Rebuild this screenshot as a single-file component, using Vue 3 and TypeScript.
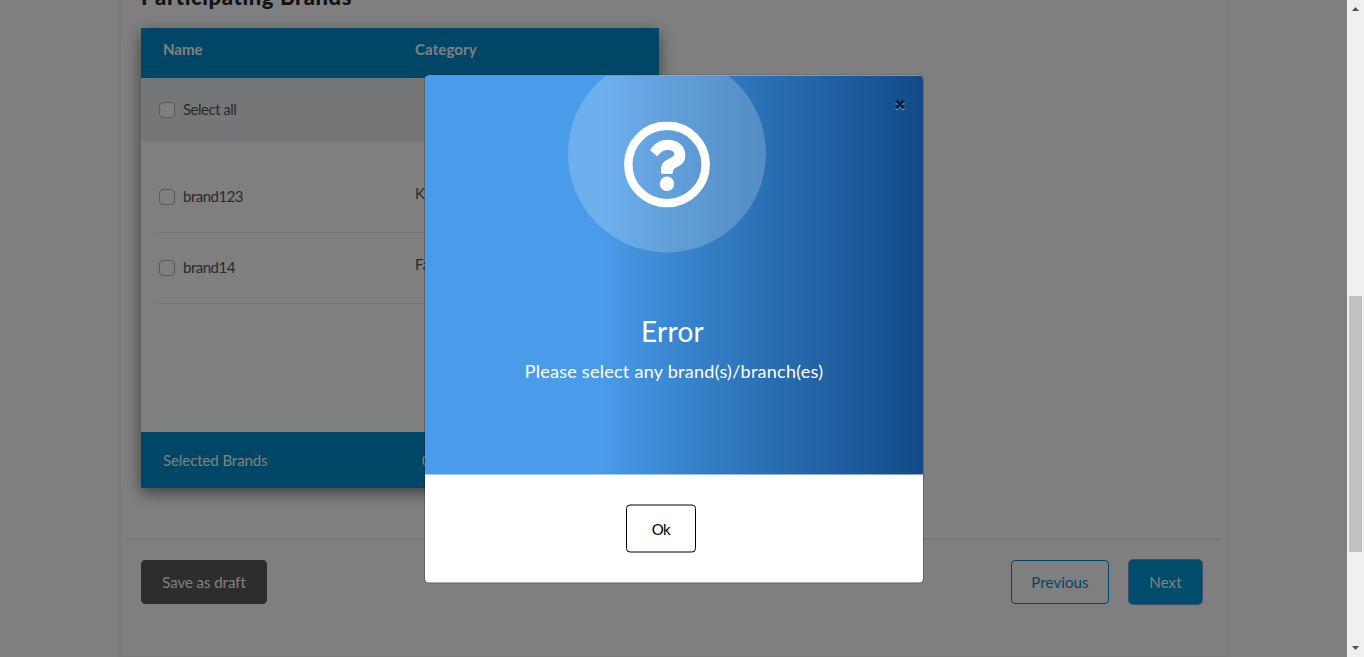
<script setup lang="ts">
import { ref } from 'vue'

interface Brand {
  name: string
  category: string
  selected: boolean
}

const brands = ref<Brand[]>([
  { name: 'brand123', category: 'Kids', selected: false },
  { name: 'brand14', category: 'Fashion', selected: false },
])
</script>

<template>
  <div class="screen">
    <main class="page">
      <section class="panel">
        <h2>Participating Brands</h2>
        <div class="table">
          <div class="thead">
            <span class="col t-name">Name</span>
            <span class="t-cat">Category</span>
          </div>
          <div class="select-all">
            <span class="box"></span><span class="t-all">Select all</span>
          </div>
          <div class="tbody">
            <div v-for="b in brands" :key="b.name" class="row">
              <span class="box"></span>
              <span class="brand">{{ b.name }}</span>
              <span class="category">{{ b.category }}</span>
            </div>
          </div>
          <div class="tfoot">
            <span class="col t-selected">Selected Brands</span>
            <span class="count">0</span>
          </div>
        </div>
        <div class="actions">
          <button class="btn save"><span>Save as draft</span></button>
          <button class="btn prev"><span>Previous</span></button>
          <button class="btn next"><span>Next</span></button>
        </div>
      </section>
    </main>

    <div class="scrollbar">
      <svg width="17" height="17" viewBox="0 0 17 17"><path d="M5 11h7L8.500 7z" fill="#505050" /></svg>
      <div class="thumb"></div>
      <svg class="down" width="17" height="17" viewBox="0 0 17 17"><path d="M5 6h7L8.500 10z" fill="#505050" /></svg>
    </div>

    <div class="backdrop">
      <div class="modal">
        <div class="hero">
          <div class="halo"></div>
          <svg class="close" width="12" height="12" viewBox="0 0 12 12">
            <path d="M2.200 3.200l7.600 7.600M9.800 3.200l-7.600 7.600" stroke="#a9c3df" stroke-width="2.800" />
            <path d="M2.200 2.200l7.600 7.600M9.800 2.200l-7.600 7.600" stroke="#09264a" stroke-width="3.200" />
          </svg>
          <svg class="question" width="86" height="86" viewBox="0 0 86 86">
            <circle cx="43" cy="43" r="38.700" fill="none" stroke="#fff" stroke-width="8.500" />
            <path
              d="M26 28.700C30 22.500 35 18.300 43.500 18.300C53 18.300 61.300 24 61.300 33.300C61.300 41 57.500 43.800 52 46C49.500 47.200 49 48.500 49 50.500Q49 52.600 47.300 52.600H38.700Q37 52.600 37 51V47.500C37 42.500 40 39.800 44.500 37.500C48.500 35.500 50.300 34.500 50.300 32.500C50.300 29.800 47 28.400 43.500 28.400C39 28.400 36.500 30.800 33.200 34.700Z"
              fill="#fff"
            />
            <circle cx="43" cy="62.300" r="7.200" fill="#fff" />
          </svg>
          <h3><span>Error</span></h3>
          <p><span>Please select any brand(s)/branch(es)</span></p>
        </div>
        <div class="foot">
          <button class="ok"><span>Ok</span></button>
        </div>
      </div>
    </div>
  </div>
</template>

<style>
body {
  margin: 0;
  overflow: hidden;
}
</style>

<style scoped>
* {
  box-sizing: border-box;
}
.screen {
  position: relative;
  display: flex;
  width: 1364px;
  height: 657px;
  overflow: hidden;
  background: #fff;
  font-family: Lato, "Open Sans", sans-serif;
  font-size: 15px;
}
.page {
  width: 1347px;
  height: 657px;
  padding-left: 119px;
  overflow: hidden;
}
.panel {
  width: 1110px;
  height: 657px;
  padding: 0 5px 0 6px;
  border: solid #f4f4f4;
  border-width: 0 2px 1px;
  overflow: hidden;
}
h2 {
  height: 28px;
  margin: 0 0 0 14px;
  font-size: 22px;
  line-height: 28px;
  font-weight: 900;
  color: #212529;
  letter-spacing: 0.6px;
}
h2::before {
  content: "";
  display: block;
  margin-top: -17px;
}
.table {
  width: 518px;
  height: 460px;
  margin: 17px 0 50px 14px;
  background: #fff;
  box-shadow: 0 5px 15px rgba(0, 0, 0, 0.5);
}
.thead {
  display: flex;
  height: 50px;
  padding: 0 22px;
  line-height: 42px;
  font-weight: 700;
  color: #fff;
  background: #008ccc;
}
.t-cat {
  letter-spacing: 0.12px;
}
.col {
  width: 252px;
}
.select-all {
  display: flex;
  align-items: center;
  height: 64px;
  padding-left: 18px;
  color: #555;
  background: #e9ecef;
}
.box {
  width: 16px;
  height: 16px;
  flex: none;
  margin-right: 8px;
  border: 1px solid #adb5bd;
  border-radius: 4px;
  background: #fff;
}
.t-all {
  line-height: 18px;
  margin-top: -3px;
  letter-spacing: -0.5px;
}
.tbody {
  height: 290px;
  padding: 20px 15px 0;
}
.row {
  display: flex;
  align-items: center;
  height: 71px;
  padding-left: 3px;
  border-bottom: 1px solid #e8e8e8;
  color: #555;
}
.brand {
  width: 232px;
  margin-top: -3px;
  letter-spacing: -0.5px;
}
.category {
  margin-top: -9px;
}
.tfoot {
  display: flex;
  height: 56px;
  padding: 0 22px;
  line-height: 56px;
  color: #fff;
  background: #008ccc;
}
.t-selected {
  letter-spacing: -0.08px;
}
.count {
  margin-left: 7px;
}
.actions {
  display: flex;
  align-items: flex-start;
  padding: 20px 20px 0 14px;
  border-top: 2px solid #f0f0f0;
}
.btn {
  height: 44px;
  padding: 0;
  border: 1px solid #008ccc;
  border-radius: 4px;
  background: #fff;
  color: #008ccc;
  font: 15px Lato, sans-serif;
  letter-spacing: 0.1px;
}
.save {
  width: 126px;
  margin-right: auto;
  color: #fff;
  background: #5a5a5a;
  border-color: #5a5a5a;
}
.save span {
  letter-spacing: -0.05px;
}
.prev {
  width: 98px;
  margin-right: 20px;
}
.next {
  width: 73px;
  color: #fff;
  background: #0098da;
  border-color: #0098da;
  box-shadow: 0 0 0 1px #7a9cd8;
}
.scrollbar {
  position: relative;
  z-index: 3;
  display: flex;
  flex-direction: column;
  width: 17px;
  height: 657px;
  background: #f0f0f0;
}
.thumb {
  width: 13px;
  height: 256px;
  margin: 279px 0 0 2px;
  background: #c1c1c1;
}
.down {
  margin-top: auto;
}
.backdrop {
  position: absolute;
  inset: 0;
  padding: 75px 0 0 424px;
  background: rgba(0, 0, 0, 0.5);
}
.modal {
  width: 500px;
  height: 509px;
  border: 1px solid rgba(0, 0, 0, 0.2);
  border-radius: 5px;
  background: #fff;
  background-clip: padding-box;
  overflow: hidden;
  transform: translateY(-0.5px);
}
.hero {
  position: relative;
  display: flex;
  flex-direction: column;
  align-items: center;
  height: 399px;
  overflow: hidden;
  color: #fff;
  background: linear-gradient(90deg, #4a9cea 35%, #3580c8 55%, #114a88 100%);
}
.halo {
  position: absolute;
  left: 143px;
  top: -21px;
  width: 198px;
  height: 198px;
  border-radius: 50%;
  background: rgba(255, 255, 255, 0.2);
}
.close {
  position: absolute;
  top: 23px;
  right: 17px;
}
.question {
  position: relative;
  flex: none;
  margin: 46px 14px 0 0;
}
h3 {
  margin: 106px 3px 0 0;
  font-size: 28px;
  line-height: 34px;
  font-weight: 400;
  letter-spacing: 0.3px;
}
p {
  margin: 12px 0 0;
  font-size: 18px;
  line-height: 22px;
  letter-spacing: 0.27px;
}
.foot {
  display: flex;
  padding: 30px 0 0 201px;
}
.ok {
  width: 70px;
  height: 48px;
  padding: 0;
  border: 1px solid #000;
  border-radius: 4px;
  background: #fff;
  color: #000;
  font: 15px Lato, sans-serif;
}
.ok span {
  letter-spacing: -0.4px;
}
</style>
